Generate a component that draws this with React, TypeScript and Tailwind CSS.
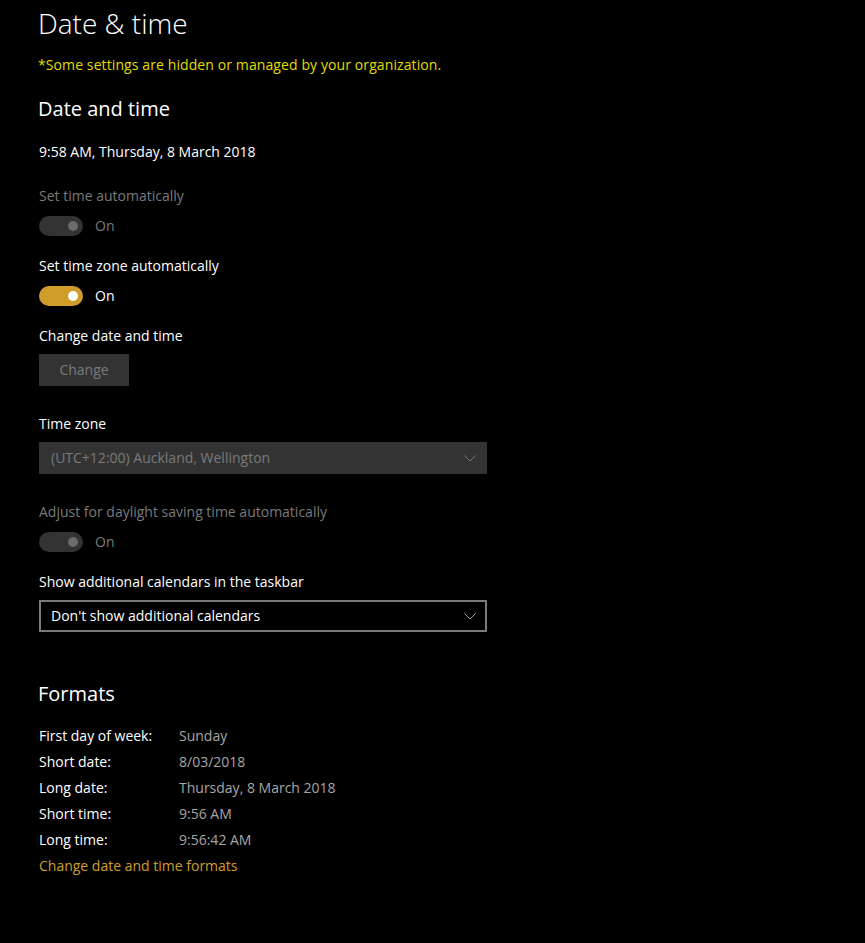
import React from 'react';

const font = { fontFamily: '"Open Sans", "Noto Sans", sans-serif' };

const Chevron = ({ color }: { color: string }) => (
  <svg width="12" height="7" viewBox="0 0 12 7" fill="none">
    <polyline points="0.5,0.5 6,6 11.5,0.5" stroke={color} strokeWidth="1" />
  </svg>
);

const Toggle = ({ on, disabled }: { on: boolean; disabled?: boolean }) => (
  <div className="flex items-center h-5 gap-3">
    <div
      className={`w-11 h-5 rounded-full flex items-center justify-end pr-[5px] ${
        disabled ? 'bg-[#333333]' : 'bg-[#d09d2a]'
      }`}
    >
      <div className={`w-[10px] h-[10px] rounded-full ${disabled ? 'bg-[#6b6b6b]' : 'bg-white'}`}></div>
    </div>
    <span className={`text-sm leading-5 ${disabled ? 'text-[#7a7a7a]' : 'text-white'}`}>{on ? 'On' : 'Off'}</span>
  </div>
);

const FORMATS = [
  ['First day of week:', 'Sunday'],
  ['Short date:', '8/03/2018'],
  ['Long date:', 'Thursday, 8 March 2018'],
  ['Short time:', '9:56 AM'],
  ['Long time:', '9:56:42 AM'],
];

export default function App() {
  return (
    <div className="min-h-screen bg-black text-white pl-[38px] pt-[5px] pb-10" style={font}>
      <h1 className="text-[28px] font-light leading-[36px]">Date &amp; time</h1>
      <p className="mt-[14px] text-sm leading-5 text-[#e0dc00] tracking-[0.1px]">*Some settings are hidden or managed by your organization.</p>

      <h2 className="mt-5 text-xl leading-7">Date and time</h2>
      <p className="mt-[19px] text-sm leading-5 pl-px">9:58 AM, Thursday, 8 March 2018</p>

      <div className="pl-px">
        <div className="mt-6 text-sm leading-5 text-[#7a7a7a]">Set time automatically</div>
        <div className="mt-[10px]"><Toggle on disabled /></div>

        <div className="mt-[20px] text-sm leading-5">Set time zone automatically</div>
        <div className="mt-[10px]"><Toggle on /></div>

        <div className="mt-[20px] text-sm leading-5">Change date and time</div>
        <button className="mt-2 w-[90px] h-8 bg-[#333333] text-[#7a7a7a] text-sm block">Change</button>

        <div className="mt-[28px] text-sm leading-5">Time zone</div>
        <div className="mt-2 w-[448px] h-8 bg-[#333333] flex items-center justify-between pl-3 pr-[11px]">
          <span className="text-sm text-[#7a7a7a]">(UTC+12:00) Auckland, Wellington</span>
          <Chevron color="#7a7a7a" />
        </div>

        <div className="mt-[28px] text-sm leading-5 text-[#7a7a7a]">Adjust for daylight saving time automatically</div>
        <div className="mt-[10px]"><Toggle on disabled /></div>

        <div className="mt-[20px] text-sm leading-5">Show additional calendars in the taskbar</div>
        <div className="mt-2 w-[448px] h-8 border-2 border-[#7a7a7a] flex items-center justify-between pl-[10px] pr-[9px]">
          <span className="text-sm">Don't show additional calendars</span>
          <Chevron color="#a0a0a0" />
        </div>
      </div>

      <h2 className="mt-12 text-xl leading-7">Formats</h2>
      <div className="mt-[15px] pl-px text-sm leading-[26px]">
        {FORMATS.map(([k, v]) => (
          <div key={k} className="flex">
            <span className="w-[140px]">{k}</span>
            <span className="text-[#a6a6a6]">{v}</span>
          </div>
        ))}
        <a className="block text-[#d09d2a]">Change date and time formats</a>
      </div>
    </div>
  );
}
